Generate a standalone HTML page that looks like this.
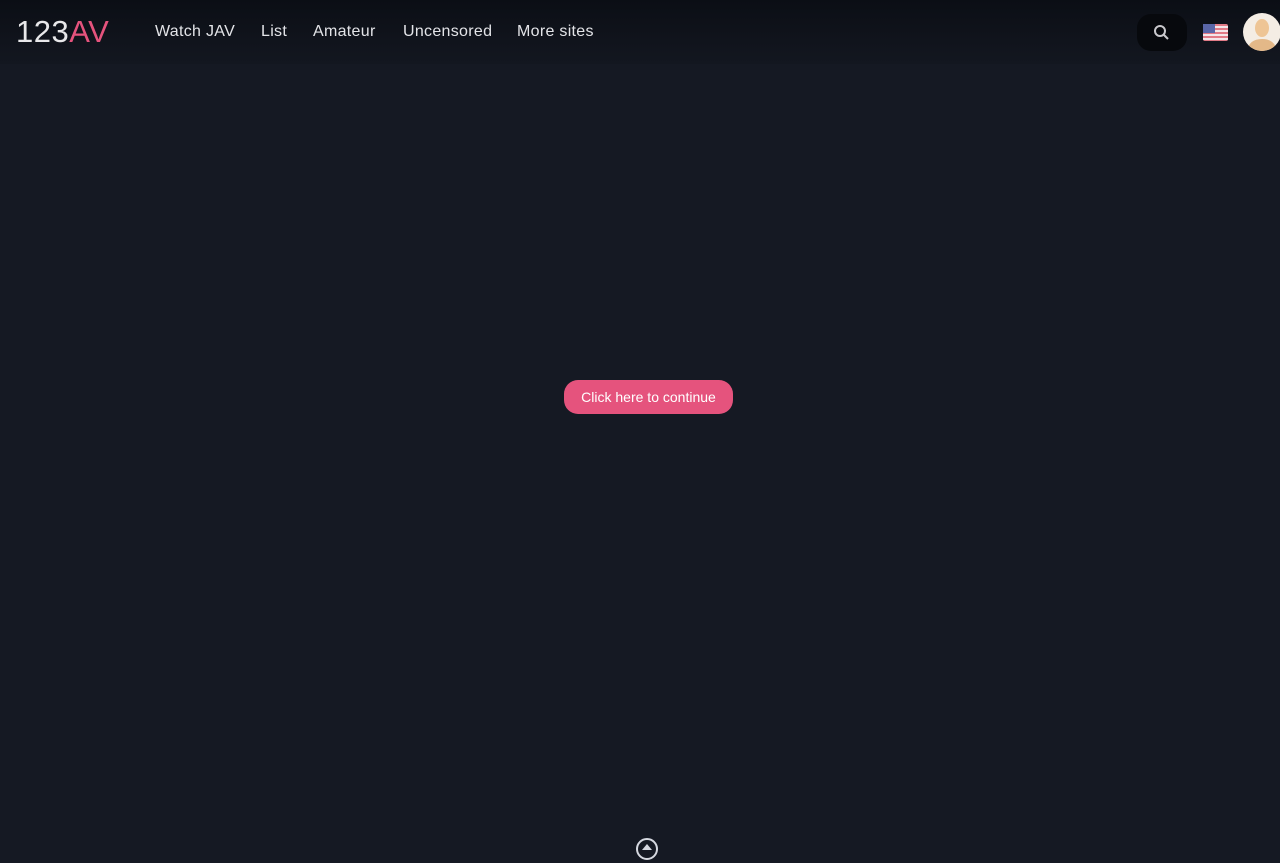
<!DOCTYPE html>
<html><head><style>
html,body{margin:0;padding:0;width:1280px;height:853px;overflow:hidden;background:#151923;font-family:"Liberation Sans",sans-serif}
.hdr{position:absolute;left:0;top:0;width:1280px;height:64px;background:linear-gradient(#0b0e15,#131720)}
.logo{position:absolute;left:16px;top:14px;font-size:31px;color:#e8e8ea;letter-spacing:0.5px}
.logo span{color:#e5537d}
.nav{position:absolute;top:23px;font-size:16px;color:#e3e4e8;letter-spacing:0.3px}
.srch{position:absolute;left:1137px;top:14px;width:50px;height:37px;border-radius:14px;background:#07090d}
.flag{position:absolute;left:1203px;top:24px;width:25px;height:17px;border-radius:2px;background:repeating-linear-gradient(#e07a86 0 2px,#f3e6e9 2px 4px)}
.flag:before{content:"";position:absolute;left:0;top:0;width:12px;height:9px;background:#5a66a8}
.av{position:absolute;left:1243px;top:13px;width:38px;height:38px;border-radius:50%;background:#f4ede4;overflow:hidden}
.btn{position:absolute;left:564px;top:380px;width:169px;height:34px;border-radius:14px;background:#e5537d;color:#fff;font-size:14px;text-align:center;line-height:34px}
.up{position:absolute;left:636px;top:838px;width:22px;height:22px;border-radius:50%;border:2px solid #d5d8e0;box-sizing:border-box}
</style></head><body>
<div class="hdr"></div>
<div class="logo">123<span>AV</span></div>
<div class="nav" style="left:155px">Watch JAV</div>
<div class="nav" style="left:261px">List</div>
<div class="nav" style="left:313px">Amateur</div>
<div class="nav" style="left:403px">Uncensored</div>
<div class="nav" style="left:517px">More sites</div>
<div class="srch"><svg width="50" height="37"><circle cx="23" cy="17" r="5" fill="none" stroke="#c8c8cc" stroke-width="2"/><line x1="27" y1="21" x2="31" y2="25" stroke="#c8c8cc" stroke-width="2"/></svg></div>
<div class="flag"></div>
<div class="av"><svg width="38" height="38"><ellipse cx="19" cy="15" rx="7" ry="9" fill="#eec595"/><path d="M4 38 Q6 26 19 26 Q32 26 34 38Z" fill="#e3b888"/></svg></div>
<div class="btn">Click here to continue</div>
<div class="up"><svg width="18" height="18"><path d="M9 4 L14 10 H4Z" fill="#d5d8e0"/></svg></div>
</body></html>
